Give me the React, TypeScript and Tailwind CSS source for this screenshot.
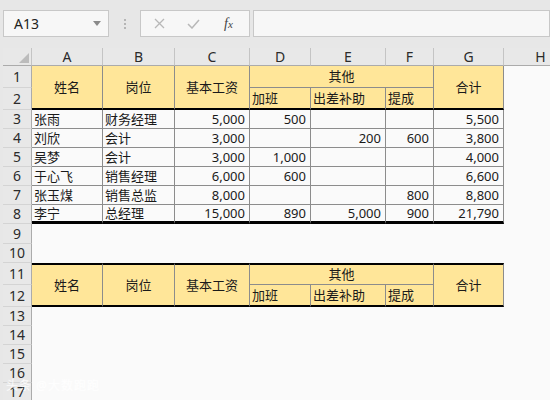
import React from 'react'

const FONT = { fontFamily: '"Noto Sans", "Noto Sans CJK SC", sans-serif' }

const COLS = ['A', 'B', 'C', 'D', 'E', 'F', 'G', 'H']

const DATA = [
  ['张雨', '财务经理', '5,000', '500', '', '', '5,500'],
  ['刘欣', '会计', '3,000', '', '200', '600', '3,800'],
  ['吴梦', '会计', '3,000', '1,000', '', '', '4,000'],
  ['于心飞', '销售经理', '6,000', '600', '', '', '6,600'],
  ['张玉煤', '销售总监', '8,000', '', '', '800', '8,800'],
  ['李宁', '总经理', '15,000', '890', '5,000', '900', '21,790'],
]

const cell = 'flex items-center border-r border-b border-[#8c8c8c] text-[13px] text-[#1a1a1a] leading-none'
const yellow = 'bg-[#ffe699] justify-center'

function RowHead({ n }: { n: number }) {
  return (
    <div className="flex items-center justify-center bg-[#e8e8e8] border-r border-b border-r-[#ababab] border-b-[#d4d4d4] text-[14px] text-[#2b2b2b] leading-none">
      {n}
    </div>
  )
}

function Blank() {
  return <div />
}

// header block of a table; top/bottom give the thick black rules
function TableHead({ row, top }: { row: number; top: boolean }) {
  const t = top ? 'border-t-2 border-t-black' : ''
  const b = 'border-b-2 border-b-black'
  return (
    <>
      <RowHead n={row} />
      <div className={`${cell} ${yellow} ${t} ${b} row-span-2`}>姓名</div>
      <div className={`${cell} ${yellow} ${t} ${b} row-span-2`}>岗位</div>
      <div className={`${cell} ${yellow} ${t} ${b} row-span-2`}>基本工资</div>
      <div className={`${cell} ${yellow} ${t} col-span-3`}>其他</div>
      <div className={`${cell} ${yellow} ${t} ${b} row-span-2`}>合计</div>
      <Blank />
      <RowHead n={row + 1} />
      <div className={`${cell} bg-[#ffe699] pl-[2px] ${b}`}>加班</div>
      <div className={`${cell} bg-[#ffe699] pl-[2px] ${b}`}>出差补助</div>
      <div className={`${cell} bg-[#ffe699] pl-[2px] ${b}`}>提成</div>
      <Blank />
    </>
  )
}

export default function App() {
  return (
    <div className="relative w-[550px] h-[400px] overflow-hidden bg-[#e7e7e7]" style={FONT}>
      {/* formula bar */}
      <div className="h-[48px] flex items-start pt-[10px] pl-[3px]">
        <div className="w-[106px] h-[27px] bg-[#f7f7f7] border border-[#c8c8c8] flex items-center justify-between pl-[10px] pr-[7px]">
          <span className="text-[14px] text-[#222]">A13</span>
          <svg width="8" height="5" viewBox="0 0 8 5">
            <polygon points="0,0 8,0 4,5" fill="#8a8a8a" />
          </svg>
        </div>
        <div className="w-[31px] h-[27px] flex flex-col items-center justify-center gap-[2px]">
          <span className="w-[2px] h-[2px] bg-[#b5b5b5]" />
          <span className="w-[2px] h-[2px] bg-[#b5b5b5]" />
          <span className="w-[2px] h-[2px] bg-[#b5b5b5]" />
        </div>
        <div className="w-[110px] h-[27px] bg-[#f7f7f7] border border-[#c8c8c8] flex items-center pl-[13px]">
          <svg width="11" height="11" viewBox="0 0 11 11">
            <path d="M1 1 L10 10 M10 1 L1 10" stroke="#b8b8b8" strokeWidth="1.3" />
          </svg>
          <svg className="ml-[22px]" width="13" height="10" viewBox="0 0 13 10">
            <path d="M1 5 L5 9 L12 1" stroke="#b8b8b8" strokeWidth="1.5" fill="none" />
          </svg>
          <span
            className="ml-[24px] text-[14px] italic text-[#444] leading-none"
            style={{ fontFamily: '"Liberation Serif", serif' }}
          >
            f<span className="text-[11px]">x</span>
          </span>
        </div>
        <div className="ml-[3px] flex-1 h-[27px] bg-[#f7f7f7] border border-[#c8c8c8]" />
      </div>

      {/* sheet */}
      <div className="ml-[3px] w-[575px] grid grid-cols-[29px_71px_72px_75px_61px_75px_48px_70px_74px] grid-rows-[18px_22px_22px_repeat(6,19px)_20px_19px_22px_22px_repeat(5,19px)] bg-[#fafafa]">
        <div className="relative bg-[#e8e8e8] border-r border-b border-r-[#c4c4c4] border-b-[#ababab]">
          <svg className="absolute right-[2px] bottom-[2px]" width="10" height="10" viewBox="0 0 10 10">
            <polygon points="10,0 10,10 0,10" fill="#bcbcbc" />
          </svg>
        </div>
        {COLS.map((c) => (
          <div
            key={c}
            className="flex items-center justify-center bg-[#e8e8e8] border-r border-b border-r-[#c4c4c4] border-b-[#ababab] text-[14px] text-[#2b2b2b] leading-none"
          >
            {c}
          </div>
        ))}

        <TableHead row={1} top={false} />

        {DATA.map((r, i) => {
          const last = i === DATA.length - 1
          const b = last ? 'border-b-[3px] border-b-black' : ''
          return (
            <React.Fragment key={i}>
              <RowHead n={i + 3} />
              <div className={`${cell} ${b} pl-[2px]`}>{r[0]}</div>
              <div className={`${cell} ${b} pl-[2px]`}>{r[1]}</div>
              {r.slice(2).map((v, j) => (
                <div key={j} className={`${cell} ${b} justify-end pr-[4px]`}>
                  {v}
                </div>
              ))}
              <Blank />
            </React.Fragment>
          )
        })}

        {[9, 10].map((n) => (
          <React.Fragment key={n}>
            <RowHead n={n} />
            <div className="col-span-8" />
          </React.Fragment>
        ))}

        <TableHead row={11} top={true} />

        {[13, 14, 15, 16, 17].map((n) => (
          <React.Fragment key={n}>
            <RowHead n={n} />
            <div className="col-span-8" />
          </React.Fragment>
        ))}
      </div>

      {/* watermark */}
      <div className="absolute left-[6px] top-[380px] text-[12px] text-white/80 tracking-[1px] leading-none">
        头条 @大数跑跑
      </div>
    </div>
  )
}
